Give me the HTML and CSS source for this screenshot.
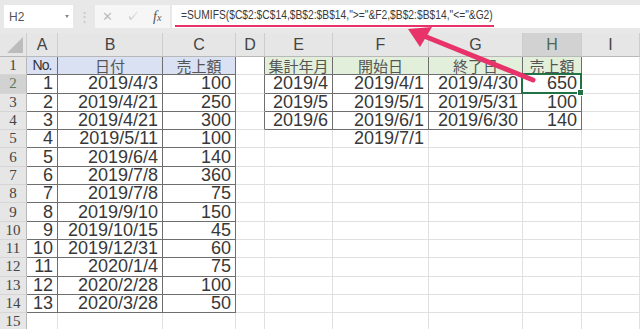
FILE: index.html
```html
<!DOCTYPE html>
<html lang="ja">
<head>
    <meta charset="UTF-8">
    <meta name="viewport" content="width=device-width, initial-scale=1.0">
    <title>SUMIFS</title>
    <link rel="stylesheet" href="styles.css">
</head>
<body>
    <div class="formula-bar">
        <div class="name-box"><span>H2</span><span class="caret"></span></div>
        <div class="grip">⋮</div>
        <div class="fx-buttons">
            <span class="btn-cancel">✕</span>
            <span class="btn-enter">✓</span>
            <span class="btn-fx"><i>f</i><small>x</small></span>
        </div>
        <div class="formula">
            <span class="formula-line"><span class="formula-text">=SUMIFS($C$2:$C$14,$B$2:$B$14,"&gt;="&amp;F2,$B$2:$B$14,"&lt;="&amp;G2)</span></span>
        </div>
    </div>

    <table class="sheet">
        <colgroup>
            <col class="w-rh"><col class="w-a"><col class="w-b"><col class="w-c"><col class="w-d">
            <col class="w-e"><col class="w-f"><col class="w-g"><col class="w-h"><col class="w-i">
        </colgroup>
        <thead>
            <tr>
                <th class="corner"><span class="tri"></span></th>
                <th>A</th><th>B</th><th>C</th><th>D</th><th>E</th><th>F</th><th>G</th><th class="sel">H</th><th>I</th>
            </tr>
        </thead>
        <tbody>
            <tr>
                <th>1</th>
                <td class="box blue ja no">No.</td><td class="box blue ja">日付</td><td class="box blue ja">売上額</td>
                <td class="edge"></td>
                <td class="box green ja">集計年月</td><td class="box green ja">開始日</td><td class="box green ja">終了日</td><td class="box green ja">売上額</td>
                <td></td>
            </tr>
            <tr>
                <th class="sel">2</th>
                <td class="box">1</td><td class="box">2019/4/3</td><td class="box">100</td>
                <td class="edge"></td>
                <td class="box">2019/4</td><td class="box">2019/4/1</td><td class="box">2019/4/30</td><td class="box active">650</td>
                <td></td>
            </tr>
            <tr>
                <th>3</th>
                <td class="box">2</td><td class="box">2019/4/21</td><td class="box">250</td>
                <td class="edge"></td>
                <td class="box">2019/5</td><td class="box">2019/5/1</td><td class="box">2019/5/31</td><td class="box">100</td>
                <td></td>
            </tr>
            <tr>
                <th>4</th>
                <td class="box">3</td><td class="box">2019/4/21</td><td class="box">300</td>
                <td class="edge"></td>
                <td class="box">2019/6</td><td class="box">2019/6/1</td><td class="box">2019/6/30</td><td class="box">140</td>
                <td></td>
            </tr>
            <tr>
                <th>5</th>
                <td class="box">4</td><td class="box">2019/5/11</td><td class="box">100</td>
                <td></td><td></td><td>2019/7/1</td><td></td><td></td><td></td>
            </tr>
            <tr>
                <th>6</th>
                <td class="box">5</td><td class="box">2019/6/4</td><td class="box">140</td>
                <td></td><td></td><td></td><td></td><td></td><td></td>
            </tr>
            <tr>
                <th>7</th>
                <td class="box">6</td><td class="box">2019/7/8</td><td class="box">360</td>
                <td></td><td></td><td></td><td></td><td></td><td></td>
            </tr>
            <tr>
                <th>8</th>
                <td class="box">7</td><td class="box">2019/7/8</td><td class="box">75</td>
                <td></td><td></td><td></td><td></td><td></td><td></td>
            </tr>
            <tr>
                <th>9</th>
                <td class="box">8</td><td class="box">2019/9/10</td><td class="box">150</td>
                <td></td><td></td><td></td><td></td><td></td><td></td>
            </tr>
            <tr>
                <th>10</th>
                <td class="box">9</td><td class="box">2019/10/15</td><td class="box">45</td>
                <td></td><td></td><td></td><td></td><td></td><td></td>
            </tr>
            <tr>
                <th>11</th>
                <td class="box">10</td><td class="box">2019/12/31</td><td class="box">60</td>
                <td></td><td></td><td></td><td></td><td></td><td></td>
            </tr>
            <tr>
                <th>12</th>
                <td class="box">11</td><td class="box">2020/1/4</td><td class="box">75</td>
                <td></td><td></td><td></td><td></td><td></td><td></td>
            </tr>
            <tr>
                <th>13</th>
                <td class="box">12</td><td class="box">2020/2/28</td><td class="box">100</td>
                <td></td><td></td><td></td><td></td><td></td><td></td>
            </tr>
            <tr>
                <th>14</th>
                <td class="box">13</td><td class="box">2020/3/28</td><td class="box">50</td>
                <td></td><td></td><td></td><td></td><td></td><td></td>
            </tr>
            <tr>
                <th>15</th>
                <td></td><td></td><td></td><td></td><td></td><td></td><td></td><td></td><td></td>
            </tr>
        </tbody>
    </table>

    <svg class="arrow" width="640" height="329" viewBox="0 0 640 329">
        <line x1="533" y1="80" x2="424" y2="36" stroke="#e8336a" stroke-width="5" stroke-linecap="round"/>
        <polygon points="408,29 432,27 420,47" fill="#e8336a"/>
    </svg>
</body>
</html>
```

FILE: styles.css
```css
body {
    margin: 0;
    width: 640px;
    height: 329px;
    overflow: hidden;
    position: relative;
    background-color: #fff;
    font-family: "Liberation Sans", Arial, sans-serif;
    color: #333;
}

/* formula bar */
.formula-bar {
    display: flex;
    align-items: flex-start;
    height: 33px;
    padding: 5px 0 0 4px;
    box-sizing: border-box;
    background-color: #e8e8e8;
}
.name-box {
    width: 69px;
    height: 23px;
    box-sizing: border-box;
    padding: 0 4px 0 5px;
    display: flex;
    align-items: center;
    justify-content: space-between;
    background-color: #fff;
    font-size: 12px;
    color: #555;
}
.caret {
    width: 0;
    height: 0;
    border-left: 2px solid transparent;
    border-right: 2px solid transparent;
    border-top: 3px solid #888;
}
.grip {
    width: 22px;
    height: 23px;
    line-height: 23px;
    text-align: center;
    font-size: 13px;
    color: #c4c4c4;
}
.fx-buttons {
    width: 75px;
    height: 23px;
    display: flex;
    align-items: center;
    background-color: #f6f6f6;
}
.btn-cancel {
    margin-left: 7px;
    font-size: 13px;
    color: #bdbdbd;
}
.btn-enter {
    margin-left: 13px;
    font-size: 13px;
    color: #c2c2c2;
}
.btn-fx {
    margin-left: 14px;
    font-family: "Liberation Serif", serif;
    font-size: 14px;
    color: #555;
}
.btn-fx small {
    font-size: 10px;
    font-style: italic;
}
.formula {
    flex: 1;
    height: 23px;
    margin-left: 2px;
    background-color: #fff;
}
.formula-line {
    display: inline-block;
    width: 319px;
    height: 20px;
    margin-left: 3px;
    border-bottom: 2px solid #e8336a;
}
.formula-text {
    display: inline-block;
    margin-left: 6px;
    font-size: 13px;
    line-height: 20px;
    color: #3a3a3a;
    white-space: nowrap;
    transform: scaleX(0.79);
    transform-origin: left center;
}

/* sheet */
.sheet {
    table-layout: fixed;
    border-collapse: separate;
    border-spacing: 0;
    width: 640px;
}
.w-rh { width: 27px; }
.w-a { width: 31px; }
.w-b { width: 105px; }
.w-c { width: 73px; }
.w-d { width: 29px; }
.w-e { width: 68px; }
.w-f { width: 96px; }
.w-g { width: 94px; }
.w-h { width: 59px; }
.w-i { width: 58px; }

.sheet th,
.sheet td {
    padding: 0;
    box-sizing: border-box;
    white-space: nowrap;
}
.sheet thead th {
    height: 24px;
    background-color: #e6e6e6;
    border-right: 1px solid #cdcdcd;
    border-bottom: 1px solid #b8b8b8;
    font-weight: normal;
    font-size: 16px;
    color: #444;
    text-align: center;
}
.sheet thead th.sel {
    background-color: #d2d2d2;
    color: #4a6a55;
}
.corner {
    position: relative;
}
.tri {
    position: absolute;
    right: 3px;
    bottom: 3px;
    width: 0;
    height: 0;
    border-left: 16px solid transparent;
    border-bottom: 16px solid #bcbcbc;
}
.sheet tbody tr {
    height: 18.3px;
}
.sheet tbody th {
    background-color: #e6e6e6;
    border-right: 1px solid #b8b8b8;
    border-bottom: 1px solid #d6d6d6;
    font-family: "Liberation Serif", serif;
    font-weight: normal;
    font-size: 15px;
    line-height: 17px;
    color: #444;
    text-align: center;
}
.sheet tbody th.sel {
    background-color: #d2d2d2;
    color: #5a7a62;
}
.sheet td {
    border-right: 1px solid #e0e0e0;
    border-bottom: 1px solid #e0e0e0;
    padding: 0 4px;
    font-size: 18px;
    line-height: 17px;
    text-align: right;
    color: #383838;
}
.sheet td.box {
    border-right-color: #6e6e6e;
    border-bottom-color: #6e6e6e;
}
.sheet td.edge {
    border-right-color: #6e6e6e;
}
.sheet td.ja {
    font-family: "Noto Sans CJK JP", sans-serif;
    font-size: 15px;
    color: #555;
    text-align: center;
    padding: 0;
}
.sheet td.no {
    font-family: "Liberation Sans Narrow", "Liberation Sans", sans-serif;
    font-size: 14px;
    letter-spacing: -1px;
    color: #333;
}
.blue {
    background-color: #d9e1f2;
}
.green {
    background-color: #e2efda;
}
.active {
    position: relative;
}
.active::after {
    content: "";
    position: absolute;
    top: -2px;
    left: -2px;
    right: -1px;
    bottom: -1px;
    border: 2px solid #217346;
}
.active::before {
    content: "";
    position: absolute;
    right: -3px;
    bottom: -3px;
    width: 5px;
    height: 5px;
    background-color: #217346;
    border: 1px solid #fff;
    z-index: 1;
}

.arrow {
    position: absolute;
    top: 0;
    left: 0;
    pointer-events: none;
}
```
